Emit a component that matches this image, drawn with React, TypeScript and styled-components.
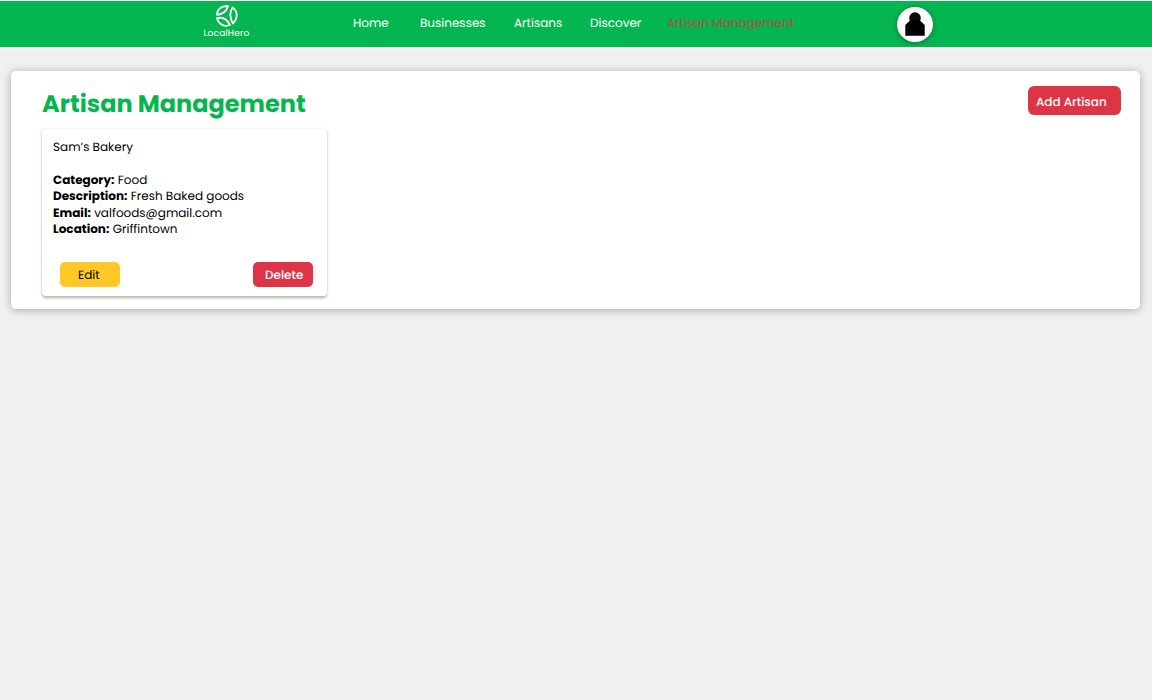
import React from "react";
import styled, { createGlobalStyle } from "styled-components";

const GlobalStyle = createGlobalStyle`
  * { box-sizing: border-box; }
  body {
    margin: 0;
    background: #f0f0f0;
    color: #000;
    font-family: Poppins, Inter, "Liberation Sans", sans-serif;
    font-size: 12px;
    text-rendering: geometricPrecision;
  }
  button { text-rendering: inherit; }
`;

const Page = styled.div`
  display: flex;
  flex-direction: column;
  min-height: 100vh;
  background: #f0f0f0;
`;

const Header = styled.header`
  display: flex;
  height: 49px;
  padding-left: 203px;
  background: #05b54f;
  border-top: 1px solid #fff;
  border-bottom: 2px solid #fdfdfd;
`;

const Brand = styled.div`
  display: flex;
  flex-direction: column;
  align-items: center;
  width: 47px;
  padding-top: 4px;
  color: #fff;
`;

const BrandName = styled.span`
  margin-top: 2px;
  font-size: 9px;
  line-height: 11px;
  letter-spacing: 0.2px;
  white-space: nowrap;
`;

const Nav = styled.nav`
  display: flex;
  width: 545px;
  margin-left: 103px;
  padding-top: 14px;
`;

const NavLink = styled.a<{ $width: number; $active?: boolean }>`
  width: ${(p) => p.$width}px;
  color: ${(p) => (p.$active ? "#b34b45" : "#fff")};
  letter-spacing: ${(p) => (p.$active ? 0.02 : 0)}px;
  line-height: 18px;
  white-space: nowrap;
`;

const Avatar = styled.div`
  display: flex;
  justify-content: center;
  width: 36px;
  height: 35px;
  margin-top: 6px;
  margin-left: -1px;
  padding-top: 5px;
  border-radius: 50%;
  background: #fff;
  box-shadow: 0 1px 5px rgba(0, 0, 0, 0.35);
`;

const Panel = styled.main`
  height: 238px;
  margin: 22px 12px 0 11px;
  padding: 15px 19px 0 31px;
  border-radius: 5px;
  background: #fffffd;
  box-shadow: 0 1px 8px rgba(0, 0, 0, 0.3);
`;

const PanelTop = styled.div`
  display: flex;
  justify-content: space-between;
  align-items: flex-start;
  height: 43px;
`;

const Title = styled.h1`
  margin: 1px 0 0;
  color: #05b54f;
  font-size: 24px;
  font-weight: 700;
  line-height: 36px;
  white-space: nowrap;
`;

const AddButton = styled.button`
  width: 93px;
  height: 29px;
  padding: 4px 0 0 8px;
  border: 0;
  border-radius: 6px;
  background: #dd3545;
  color: #fff;
  font: 500 12px/18px Poppins, Inter, "Liberation Sans", sans-serif;
  text-align: left;
  white-space: nowrap;
`;

const Card = styled.article`
  width: 285px;
  height: 167px;
  padding: 10px 14px 0 11px;
  border-radius: 4px;
  background: #fff;
  box-shadow: 0 1.5px 3px rgba(0, 0, 0, 0.3);
`;

const CardName = styled.div`
  height: 34px;
  line-height: 18px;
`;

const Details = styled.dl`
  display: flex;
  flex-direction: column;
  height: 89px;
  margin: 0;
`;

const Detail = styled.div`
  display: flex;
  gap: 3.3px;
  height: 16.4px;
  line-height: 16.4px;
  white-space: nowrap;
`;

const Label = styled.dt`
  font-weight: 700;
`;

const Value = styled.dd`
  margin: 0;
`;

const Actions = styled.div`
  display: flex;
  justify-content: space-between;
  padding-left: 7px;
`;

const CardButton = styled.button<{ $danger?: boolean }>`
  width: 60px;
  height: 25px;
  padding: 2px 0 0 ${(p) => (p.$danger ? 12 : 18)}px;
  border: 0;
  border-radius: 5px;
  background: ${(p) => (p.$danger ? "#dd3545" : "#ffc826")};
  color: ${(p) => (p.$danger ? "#fff" : "#000")};
  font: ${(p) => (p.$danger ? 500 : 400)} 12px/18px Poppins, Inter, "Liberation Sans", sans-serif;
  text-align: left;
`;

const links = [
  { label: "Home", width: 67 },
  { label: "Businesses", width: 94 },
  { label: "Artisans", width: 76 },
  { label: "Discover", width: 77 },
  { label: "Artisan Management", width: 130, active: true },
];

const details = [
  { label: "Category:", value: "Food" },
  { label: "Description:", value: "Fresh Baked goods" },
  { label: "Email:", value: "valfoods@gmail.com" },
  { label: "Location:", value: "Griffintown" },
];

const Logo = () => (
  <svg width="22" height="22" viewBox="0 0 22 22" fill="none" stroke="currentColor" strokeWidth="1.8" strokeLinejoin="round">
    <path d="M1 9.800C1 4.500 5 1 12 1C11 5.500 7 9.500 1 9.800Z" />
    <path d="M16.500 2.500C21.500 6 22.500 12.500 17 18.500C13.800 13.500 13.500 7.500 16.500 2.500Z" />
    <path d="M1 13.200C6 11.800 11 14 14 19.800C8.500 22.500 2.800 19.500 1 13.200Z" />
  </svg>
);

const Person = () => (
  <svg width="20" height="24" viewBox="0 0 20 24" fill="#000">
    <circle cx="10" cy="6" r="5.800" fill="#0c0c0c" />
    <path d="M0.300 23.700V13L5.500 8H14.500L19.700 13V23.700Z" />
  </svg>
);

export default function App() {
  return (
    <Page>
      <GlobalStyle />
      <Header>
        <Brand>
          <Logo />
          <BrandName>LocalHero</BrandName>
        </Brand>
        <Nav>
          {links.map((l) => (
            <NavLink key={l.label} $width={l.width} $active={l.active}>
              {l.label}
            </NavLink>
          ))}
        </Nav>
        <Avatar>
          <Person />
        </Avatar>
      </Header>
      <Panel>
        <PanelTop>
          <Title>Artisan Management</Title>
          <AddButton>Add Artisan</AddButton>
        </PanelTop>
        <Card>
          <CardName>Sam’s Bakery</CardName>
          <Details>
            {details.map((d) => (
              <Detail key={d.label}>
                <Label>{d.label}</Label>
                <Value>{d.value}</Value>
              </Detail>
            ))}
          </Details>
          <Actions>
            <CardButton>Edit</CardButton>
            <CardButton $danger>Delete</CardButton>
          </Actions>
        </Card>
      </Panel>
    </Page>
  );
}
